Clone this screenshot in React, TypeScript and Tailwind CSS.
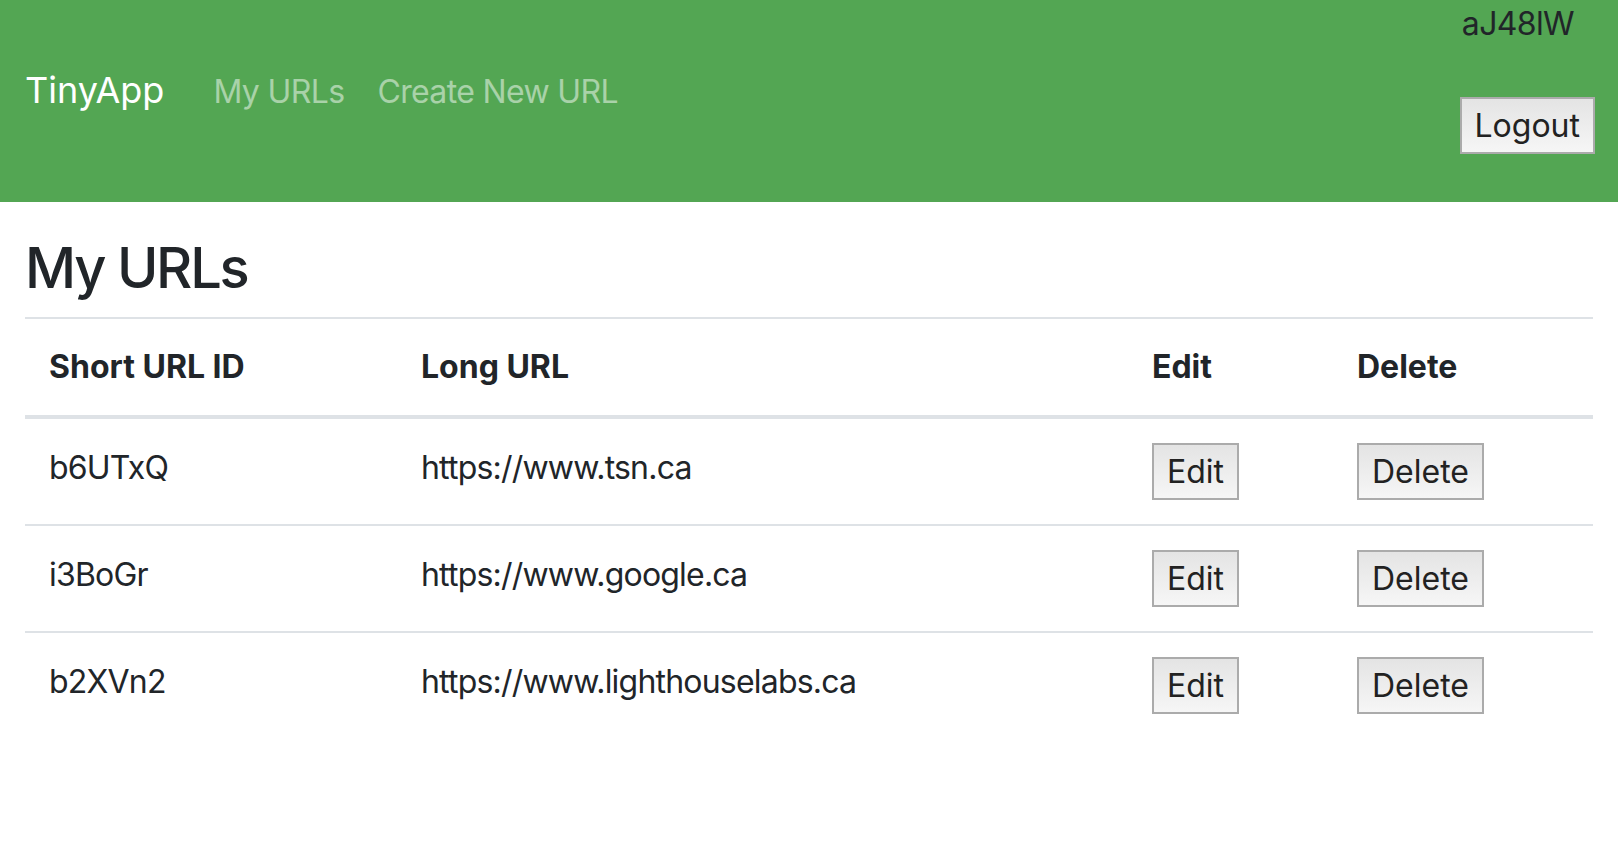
import React from "react";

const urls = [
  { id: "b6UTxQ", long: "https://www.tsn.ca" },
  { id: "i3BoGr", long: "https://www.google.ca" },
  { id: "b2XVn2", long: "https://www.lighthouselabs.ca" },
];

const btn =
  "h-[57px] px-[13px] border-2 border-[#ababab] bg-gradient-to-b from-[#e4e4e4] to-[#f6f6f6] text-[32px] leading-none text-[#222]";

export default function App() {
  return (
    <div className="min-h-screen bg-white text-[#212529] font-['Inter','Liberation_Sans',sans-serif]">
      <nav className="h-[202px] bg-[#53a653] flex justify-between">
        <div className="flex items-baseline pt-[66px] pl-[25px]">
          <a className="text-white text-[36px] leading-[48px] mr-[49px]">TinyApp</a>
          <a className="text-white/50 text-[32px] leading-[48px] mr-[33px] tracking-[-0.02em]">My URLs</a>
          <a className="text-white/50 text-[32px] leading-[48px] tracking-[-0.02em]">Create New URL</a>
        </div>
        <div className="flex flex-col items-end pr-[23px]">
          <span className="text-[32px] leading-[48px] mr-[21px] tracking-[-0.02em]">aJ48lW</span>
          <button className={btn + " mt-[49px]"}>Logout</button>
        </div>
      </nav>

      <main className="px-[25px]">
        <h1 className="mt-[33px] mb-[15px] text-[56px] leading-[1.2] font-medium tracking-[-0.04em]">My URLs</h1>
        <table className="w-full border-collapse text-[32px] leading-[48px]">
          <thead>
            <tr className="border-t-2 border-[#dee2e6]">
              <th className="w-[372px] text-left font-bold px-6 py-6 border-b-4 border-[#dee2e6]">Short URL ID</th>
              <th className="w-[731px] text-left font-bold px-6 py-6 border-b-4 border-[#dee2e6]">Long URL</th>
              <th className="w-[205px] text-left font-bold px-6 py-6 border-b-4 border-[#dee2e6]">Edit</th>
              <th className="text-left font-bold px-6 py-6 border-b-4 border-[#dee2e6]">Delete</th>
            </tr>
          </thead>
          <tbody>
            {urls.map((u, i) => (
              <tr key={u.id} className={i > 0 ? "border-t-2 border-[#dee2e6]" : ""}>
                <td className="px-6 pt-[25px] pb-6 align-top tracking-[-0.025em]">{u.id}</td>
                <td className="px-6 pt-[25px] pb-6 align-top tracking-[-0.025em]">{u.long}</td>
                <td className="px-6 py-6 align-top">
                  <button className={btn}>Edit</button>
                </td>
                <td className="px-6 py-6 align-top">
                  <button className={btn}>Delete</button>
                </td>
              </tr>
            ))}
          </tbody>
        </table>
      </main>
    </div>
  );
}
